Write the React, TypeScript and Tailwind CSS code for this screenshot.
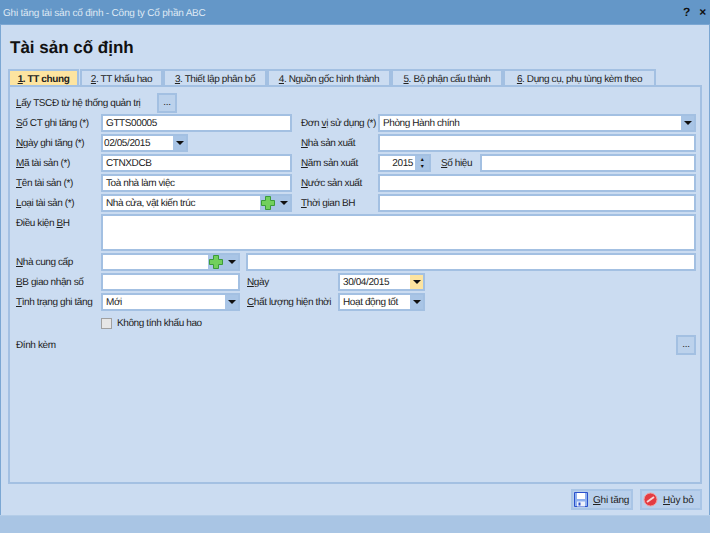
import type { ReactNode } from "react";

const inputCls = "h-[18px] border-2 border-[#a3c0e2] bg-white flex items-center text-[10px] tracking-[-0.4px] text-[#222] overflow-hidden whitespace-nowrap";

function Arrow() {
  return <div className="w-0 h-0 border-x-[4px] border-x-transparent border-t-[4px] border-t-[#111]" />;
}

function Label({ u, pre = "", rest, w }: { u: string; pre?: string; rest: string; w: string }) {
  return (
    <div className={`${w} shrink-0 pt-[1px] text-[10px] tracking-[-0.4px] text-[#222] whitespace-pre`}>
      {pre}
      <u>{u}</u>
      {rest}
    </div>
  );
}

function Input({ value, w }: { value?: string; w: string }) {
  return <div className={`${inputCls} ${w} px-[3px] pt-[1px]`}>{value}</div>;
}

function Combo({ value, w, yellow, pad = "pl-[1px]" }: { value: string; w: string; yellow?: boolean; pad?: string }) {
  return (
    <div className={`${inputCls} ${w}`}>
      <div className={`flex-1 pt-[1px] ${pad}`}>{value}</div>
      <div className={`w-[13px] h-full flex items-center justify-center ${yellow ? "bg-[#fde4a0]" : "bg-[#a9c5e6]"}`}>
        <Arrow />
      </div>
    </div>
  );
}

function Plus() {
  return (
    <svg width="14" height="14" viewBox="0 0 14 14">
      <path d="M4.5 .5h5v4h4v5h-4v4h-5v-4h-4v-5h4z" fill="#72d05c" stroke="#3c9c38" strokeWidth="1" />
    </svg>
  );
}

function PlusCombo({ value, w }: { value?: string; w: string }) {
  return (
    <div className={`${inputCls} ${w}`}>
      <div className="flex-1 pl-[3px] pt-[1px]">{value}</div>
      <div className="w-[30px] h-full bg-[#a9c5e6] flex items-center gap-[5px] pl-[1px]">
        <Plus />
        <Arrow />
      </div>
    </div>
  );
}

function Row({ children, h = "h-[18px]", mb = "mb-[2px]" }: { children: ReactNode; h?: string; mb?: string }) {
  return <div className={`flex items-center ${h} ${mb}`}>{children}</div>;
}

function Tab({ n, text, w, active }: { n: string; text: string; w: string; active?: boolean }) {
  return (
    <div
      className={`${w} h-[16px] flex items-center justify-center whitespace-pre border-2 border-b-0 border-[#a3c0e2] pt-[2px] text-[10px] tracking-[-0.4px] text-[#222] ${
        active ? "bg-[#fde4a0] font-bold" : "bg-[#cbdcf1]"
      }`}
    >
      <span>
        <u>{n}</u>. {text}
      </span>
    </div>
  );
}

function Footer({ icon, u, rest }: { icon: ReactNode; u: string; rest: string }) {
  return (
    <div className="w-[62px] h-[21px] border-2 border-[#a9c5e6] bg-[#b9d0ec] flex items-center gap-[5px] pl-[1px] text-[10px] text-[#222] whitespace-nowrap">
      {icon}
      <span className="pt-[2px]">
        <u>{u}</u>
        {rest}
      </span>
    </div>
  );
}

export default function App() {
  return (
    <div className="w-[710px] h-[533px] flex flex-col bg-[#cbdcf1] font-['Liberation_Sans',sans-serif] tracking-[-0.2px] [text-rendering:geometricPrecision] overflow-hidden">
      <div className="h-[25px] bg-[#6497c8] flex items-center justify-between pl-[3px] pr-[4px] border-b border-[#7ba7d3]">
        <span className="text-[10px] text-[#dfe9f4] pt-[2px]">Ghi tăng tài sản cố định - Công ty Cổ phần ABC</span>
        <div className="flex gap-[9px] text-[12px] font-bold text-[#111]">
          <span>?</span>
          <span>×</span>
        </div>
      </div>

      <div className="flex-1 border-x border-[#7ba7d3] flex flex-col">
        <h1 className="text-[17px] leading-[22px] font-bold tracking-normal text-[#111] pl-[9px] mt-[12px] mb-[10px]">Tài sản cố định</h1>

        <div className="flex pl-[7px] gap-0">
          <Tab n="1" text="TT chung" w="w-[71px]" active />
          <div className="w-[1px]" />
          <Tab n="2" text="TT khấu hao" w="w-[83px]" />
          <Tab n="3" text="Thiết lập phân bổ" w="w-[104px]" />
          <Tab n="4" text="Nguồn gốc hình thành" w="w-[124px]" />
          <Tab n="5" text="Bộ phận cấu thành" w="w-[112px]" />
          <Tab n="6" text="Dụng cụ, phụ tùng kèm theo" w="w-[153px]" />
        </div>

        <div className="ml-[7px] mr-[7px] h-[399px] border-2 border-[#a3c0e2] pl-[6px] pr-[4px] pt-[6px]">
          <Row h="h-[20px]" mb="mb-[1px]">
            <Label u="L" rest="ấy TSCĐ từ hệ thống quản trị" w="w-[141px]" />
            <div className="w-[20px] h-[20px] border-2 border-[#a3c0e2] bg-[#bcd2ec] flex items-center justify-center text-[10px] text-[#222] leading-none">
              ...
            </div>
          </Row>

          <Row>
            <Label u="S" rest="ố CT ghi tăng (*)" w="w-[85px]" />
            <Input value="GTTS00005" w="w-[191px]" />
            <Label u="v" pre="Đơn " rest="ị sử dụng (*)" w="w-[77px] ml-[9px]" />
            <Combo value="Phòng Hành chính" w="w-[318px]" pad="pl-[3px]" />
          </Row>
          <Row>
            <Label u="N" rest="gày ghi tăng (*)" w="w-[85px]" />
            <Combo value="02/05/2015" w="w-[87px]" />
            <div className="w-[104px]" />
            <Label u="N" rest="hà sản xuất" w="w-[77px] ml-[9px]" />
            <Input w="w-[318px]" />
          </Row>
          <Row>
            <Label u="M" rest="ã tài sản (*)" w="w-[85px]" />
            <Input value="CTNXDCB" w="w-[191px]" />
            <Label u="N" rest="ăm sản xuất" w="w-[77px] ml-[9px]" />
            <div className={`${inputCls} w-[53px]`}>
              <div className="flex-1 text-right pr-[2px] pt-[1px]">2015</div>
              <div className="w-[14px] h-full bg-[#a9c5e6] flex flex-col items-center justify-around text-[6px] leading-none text-[#111]">
                <span>▴</span>
                <span>▾</span>
              </div>
            </div>
            <Label u="S" rest="ố hiệu" w="w-[39px] ml-[10px]" />
            <Input w="w-[216px]" />
          </Row>
          <Row>
            <Label u="T" rest="ên tài sản (*)" w="w-[85px]" />
            <Input value="Toà nhà làm việc" w="w-[191px]" />
            <Label u="N" rest="ước sản xuất" w="w-[77px] ml-[9px]" />
            <Input w="w-[318px]" />
          </Row>
          <Row>
            <Label u="L" rest="oại tài sản (*)" w="w-[85px]" />
            <PlusCombo value="Nhà cửa, vật kiến trúc" w="w-[191px]" />
            <Label u="T" rest="hời gian BH" w="w-[77px] ml-[9px]" />
            <Input w="w-[318px]" />
          </Row>
          <div className="flex h-[37px] mb-[2px]">
            <div className="w-[85px] shrink-0 text-[10px] tracking-[-0.4px] text-[#222] pt-[2px]">
              Điều kiện <u>B</u>H
            </div>
            <div className="flex-1 border-2 border-[#a3c0e2] bg-white" />
          </div>
          <Row>
            <Label u="N" rest="hà cung cấp" w="w-[85px]" />
            <PlusCombo w="w-[139px]" />
            <Input w="w-[450px] ml-[6px]" />
          </Row>
          <Row>
            <Label u="B" rest="B giao nhận số" w="w-[85px]" />
            <Input w="w-[139px]" />
            <Label u="N" rest="gày" w="w-[91px] ml-[7px]" />
            <Combo value="30/04/2015" w="w-[87px]" yellow pad="pl-[3px]" />
          </Row>
          <Row>
            <Label u="T" rest="ình trạng ghi tăng" w="w-[85px]" />
            <Combo value="Mới" w="w-[139px]" pad="pl-[3px]" />
            <Label u="C" rest="hất lượng hiện thời" w="w-[91px] ml-[7px]" />
            <Combo value="Hoạt động tốt" w="w-[87px]" pad="pl-[3px]" />
          </Row>
          <div className="flex items-center h-[18px] pl-[85px] mt-[3px] mb-[3px] gap-[5px]">
            <div className="w-[11px] h-[11px] border border-[#a0a0a0] bg-[#e6e6e6]" />
            <span className="text-[10px] tracking-[-0.4px] text-[#222] pt-[1px]">Không tính khấu hao</span>
          </div>
          <div className="flex items-center justify-between h-[20px]">
            <span className="text-[10px] tracking-[-0.4px] text-[#222] pt-[1px]">Đính kèm</span>
            <div className="w-[20px] h-[20px] border-2 border-[#a3c0e2] bg-[#bcd2ec] flex items-center justify-center text-[10px] text-[#222] leading-none">
              ...
            </div>
          </div>
        </div>

        <div className="flex justify-end gap-[7px] pr-[7px] mt-[5px]">
          <Footer
            u="G"
            rest="hi tăng"
            icon={
              <svg width="14" height="15" viewBox="0 0 14 15">
                <path d="M.5 .5h13v14H.5z" fill="#8fb0ee" stroke="#2a50cc" />
                <path d="M3 1h8v6H3z" fill="#fff" />
                <path d="M3 9.5h8v5H3z" fill="#eef2fb" />
                <path d="M4.5 10.5h2v3h-2z" fill="#2a50cc" />
              </svg>
            }
          />
          <Footer
            u="H"
            rest="ủy bỏ"
            icon={
              <svg width="15" height="15" viewBox="0 0 15 15">
                <circle cx="7.5" cy="7.5" r="6.5" fill="#e33b42" stroke="#f0a0a0" />
                <path d="M4 10l7-5" stroke="#f7d5d5" strokeWidth="2" />
              </svg>
            }
          />
        </div>
      </div>

      <div className="h-[18px] bg-[#a9c5e4] border-t border-[#b4cde8]" />
    </div>
  );
}
